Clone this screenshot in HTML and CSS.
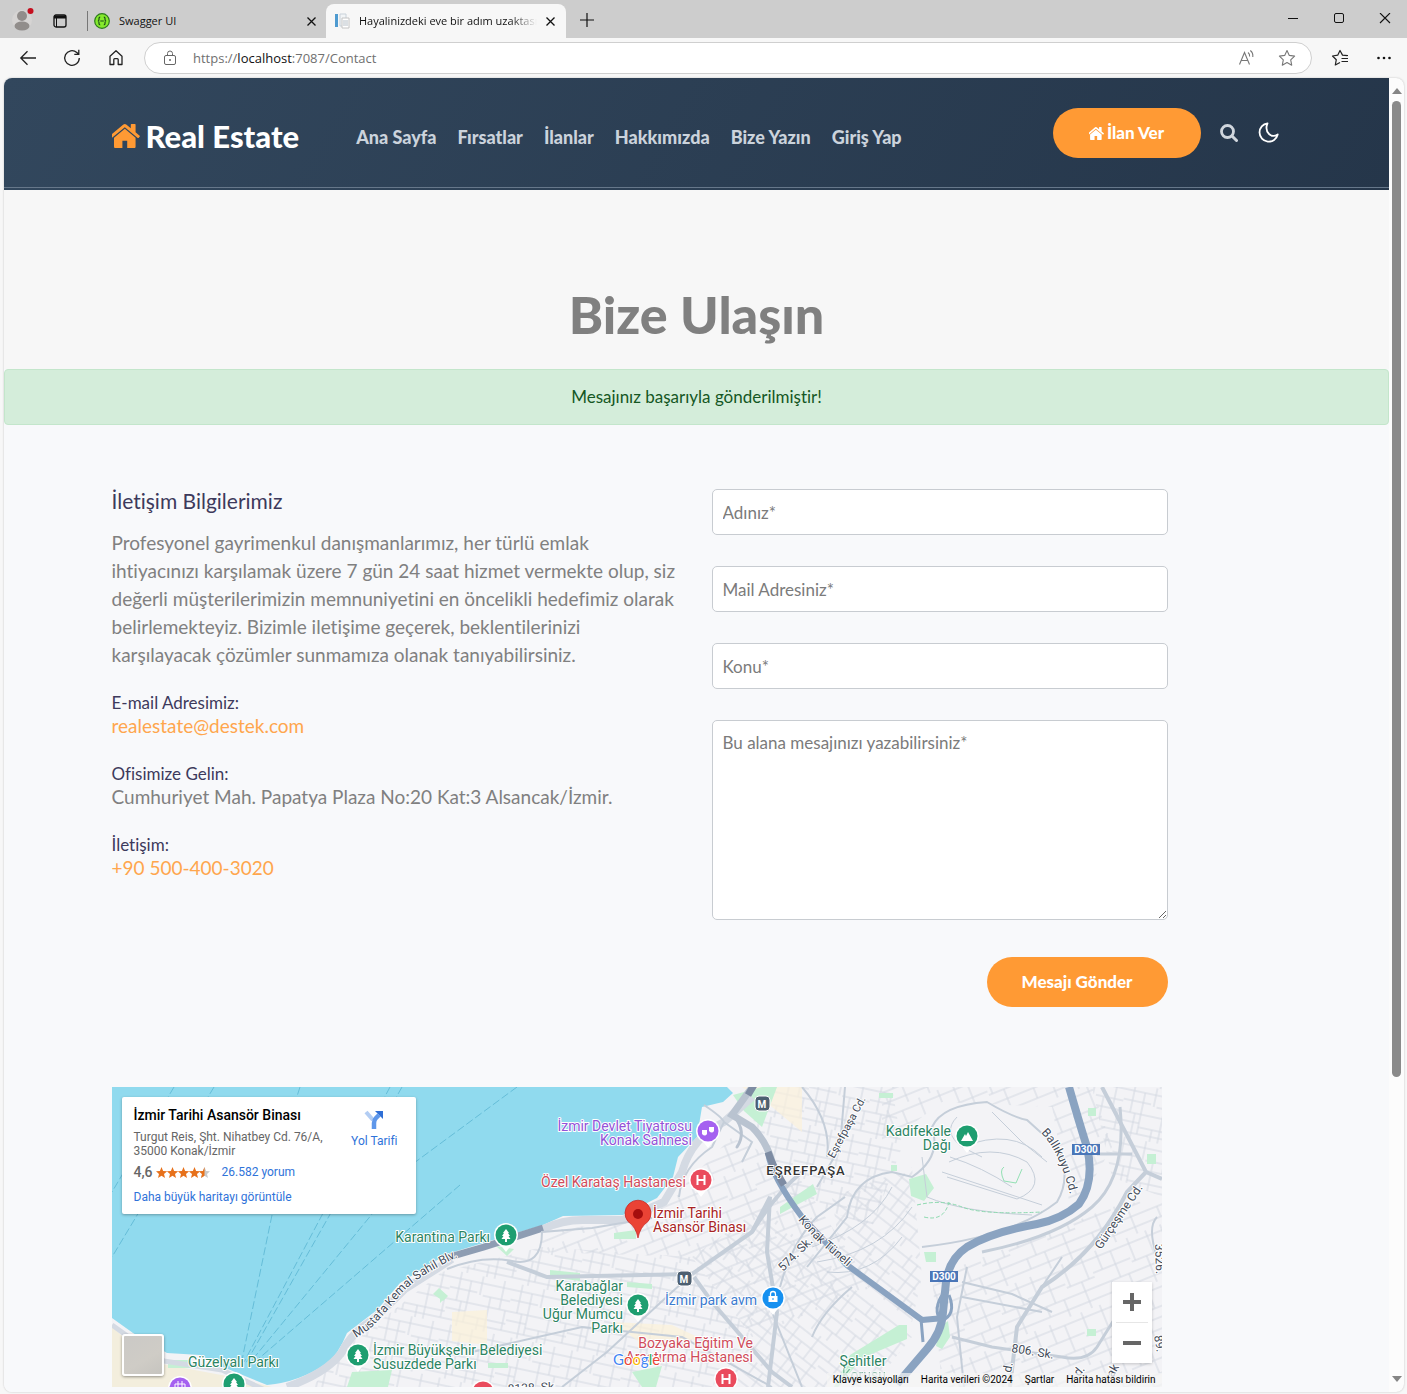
FILE: index.html
```html
<!DOCTYPE html>
<html lang="tr">
<head>
<meta charset="utf-8">
<meta name="viewport" content="width=device-width, initial-scale=1">
<title>Hayalinizdeki eve bir adım uzaktasınız</title>
<link rel="stylesheet" href="styles.css">
</head>
<body>
<div class="browser">
  <div class="tabbar">
    <button class="chrome-btn profile" aria-label="Profil">
      <svg width="26" height="26" viewBox="0 0 26 26"><circle cx="11" cy="14" r="10" fill="#d6d4d3"/><circle cx="11" cy="10" r="5" fill="#918d8b"/><ellipse cx="11" cy="20" rx="7.500" ry="4.500" fill="#918d8b"/><circle cx="19.500" cy="5" r="4" fill="#cdcdcd"/><circle cx="19.500" cy="5" r="3" fill="#c50f1f"/></svg>
    </button>
    <button class="chrome-btn workspaces" aria-label="Sekme eylemleri">
      <svg width="14" height="14" viewBox="0 0 14 14"><rect x="1" y="1" width="12" height="12" rx="2" fill="none" stroke="#111" stroke-width="1.300"/><path d="M1 1.500h12V4.500H1z" fill="#111"/><path d="M3.500 4v9" stroke="#111"/></svg>
    </button>
    <div class="tab tab-idle">
      <svg width="16" height="16" viewBox="0 0 16 16"><circle cx="8" cy="8" r="7.300" fill="#85ea2d" stroke="#2c7a1c" stroke-width="1.200"/><path d="M6.200 4.200c-1.300 0-1.200.8-1.200 2 0 1-.2 1.800-1.200 1.800 1 0 1.200.8 1.200 1.800 0 1.200-.1 2 1.200 2M9.800 4.200c1.300 0 1.200.8 1.200 2 0 1 .2 1.800 1.200 1.800-1 0-1.200.8-1.200 1.800 0 1.200.1 2-1.200 2M6.300 8h3.500" fill="none" stroke="#1d4a1d" stroke-width="1.200"/></svg>
      <span class="tab-title">Swagger UI</span>
      <button class="chrome-btn" aria-label="Sekmeyi kapat"><svg width="9" height="9" viewBox="0 0 9 9"><path d="M.5.5l8 8M8.500.5l-8 8" stroke="#111" stroke-width="1.300"/></svg></button>
    </div>
    <div class="tab tab-active">
      <svg width="16" height="16" viewBox="0 0 16 16"><path d="M1 1h3v13H1z" fill="#4f9bd0"/><path d="M6 1h6v12H6z" fill="#f2f5f7" stroke="#c9d2da"/><path d="M8 5h7v10H8z" fill="#fff" stroke="#c4c4c4"/><path d="M9 8h5M9 10h5M9 12h5" stroke="#b7c0c8"/></svg>
      <span class="tab-title tab-fade">Hayalinizdeki eve bir adım uzaktasınız</span>
      <button class="chrome-btn" aria-label="Sekmeyi kapat"><svg width="9" height="9" viewBox="0 0 9 9"><path d="M.5.5l8 8M8.500.5l-8 8" stroke="#111" stroke-width="1.300"/></svg></button>
    </div>
    <button class="chrome-btn new-tab" aria-label="Yeni sekme"><svg width="14" height="14" viewBox="0 0 14 14"><path d="M7 0v14M0 7h14" stroke="#111" stroke-width="1.200"/></svg></button>
    <div class="window-controls">
      <button class="chrome-btn" aria-label="Simge durumuna küçült"><svg width="12" height="12" viewBox="0 0 12 12"><path d="M1 5.500h10" stroke="#111"/></svg></button>
      <button class="chrome-btn" aria-label="Ekranı kapla"><svg width="12" height="12" viewBox="0 0 12 12"><rect x="1.500" y=".5" width="9" height="9" rx="1.500" fill="none" stroke="#111"/></svg></button>
      <button class="chrome-btn" aria-label="Kapat"><svg width="12" height="12" viewBox="0 0 12 12"><path d="M1 0l10 10M11 0L1 10" stroke="#111" stroke-width="1.100"/></svg></button>
    </div>
  </div>

  <div class="toolbar">
    <button class="chrome-btn" aria-label="Geri"><svg width="18" height="18" viewBox="0 0 18 18"><path d="M17 9H2M8.500 2.200L1.800 9l6.700 6.800" fill="none" stroke="#222" stroke-width="1.300"/></svg></button>
    <button class="chrome-btn" aria-label="Yenile"><svg width="18" height="18" viewBox="0 0 18 18"><path d="M16.300 9A7.300 7.300 0 1 1 13.800 3.500L15.800 5.300M15.800.8v4.600h-4.500" fill="none" stroke="#222" stroke-width="1.300"/></svg></button>
    <button class="chrome-btn" aria-label="Giriş"><svg width="18" height="18" viewBox="0 0 18 18"><path d="M3 7.200L9 1.800l6 5.400v8.300h-3.800V10.500q0-.9-.9-.9H7.700q-.9 0-.9.900v5H3z" fill="none" stroke="#222" stroke-width="1.300" stroke-linejoin="round"/></svg></button>
    <div class="address">
      <svg width="14" height="16" viewBox="0 0 14 16"><rect x="1.500" y="5.500" width="11" height="9" rx="1.500" fill="none" stroke="#666"/><path d="M4.500 5.500V3.500a2.500 2.500 0 0 1 5 0v2" fill="none" stroke="#666"/><circle cx="7" cy="10" r="1" fill="#666"/></svg>
      <div class="url">https://<span class="host">localhost</span>:7087/Contact</div>
      <button class="chrome-btn" aria-label="Sesli oku"><svg width="18" height="18" viewBox="0 0 18 18"><path d="M1.500 15.500L6.500 3.500l5 12M3.300 11.500h6.500M10 3.500q2 1.500 1.600 4M12.300 1.500q3 2.300 2.500 6.500" fill="none" stroke="#777" stroke-width="1.100"/></svg></button>
      <button class="chrome-btn" aria-label="Sık kullanılanlara ekle"><svg width="18" height="18" viewBox="0 0 18 18"><path d="M9 1.500l2.300 4.900 5.300.7-3.900 3.700 1 5.400L9 13.600l-4.700 2.600 1-5.400L1.400 7.100l5.300-.7z" fill="none" stroke="#777" stroke-width="1.100" stroke-linejoin="round"/></svg></button>
    </div>
    <button class="chrome-btn" aria-label="Sık kullanılanlar"><svg width="18" height="18" viewBox="0 0 18 18"><path d="M16.500 6.700l-5-.6L9 1.500 6.700 6.200l-5.200.8 3.800 3.700-1 5.300L9 13.500M10.500 9.500H17M10.500 12.500H17M12 6.500h5" fill="none" stroke="#222" stroke-width="1.200" stroke-linejoin="round"/></svg></button>
    <button class="chrome-btn" aria-label="Ayarlar ve diğerleri"><svg width="18" height="18" viewBox="0 0 18 18"><g fill="#111"><circle cx="3.500" cy="9" r="1.300"/><circle cx="9" cy="9" r="1.300"/><circle cx="14.500" cy="9" r="1.300"/></g></svg></button>
  </div>

  <div class="viewport">
    <div class="page">
      <header class="site-header">
        <div class="container header-row">
          <a class="logo" href="#">
            <svg width="28" height="24" viewBox="149 253 1494 1283" fill="#ff9a34"><path id="house" d="M1408 992v480q0 26-19 45t-45 19h-384v-384h-256v384h-384q-26 0-45-19t-19-45v-480q0-1 .5-3t.5-3l575-474 575 474q1 2 1 6zm223-69l-62 74q-8 9-21 11h-3q-13 0-21-7l-692-577-692 577q-12 8-24 7-13-2-21-11l-62-74q-8-10-7-23.500t11-21.500l719-599q32-26 76-26t76 26l244 204v-195q0-14 9-23t23-9h192q14 0 23 9t9 23v408l219 182q10 8 11 21.500t-7 23.500z"/></svg>
            <span>Real Estate</span>
          </a>
          <nav class="menu">
            <a href="#">Ana Sayfa</a><a href="#">Fırsatlar</a><a href="#">İlanlar</a><a href="#">Hakkımızda</a><a href="#">Bize Yazın</a><a href="#">Giriş Yap</a>
          </nav>
          <div class="actions">
            <a class="btn post-btn" href="#">
              <svg width="15" height="13" viewBox="149 253 1494 1283" fill="#fff"><path d="M1408 992v480q0 26-19 45t-45 19h-384v-384h-256v384h-384q-26 0-45-19t-19-45v-480l576-480 576 480zm223-69l-62 74q-8 9-21 11h-3q-13 0-21-7l-692-577-692 577q-12 8-24 7-13-2-21-11l-62-74q-8-10-7-23.500t11-21.500l719-599q32-26 76-26t76 26l244 204v-195q0-14 9-23t23-9h192q14 0 23 9t9 23v408l219 182q10 8 11 21.500t-7 23.500z"/></svg>
              <span>İlan Ver</span>
            </a>
            <button class="icon-btn" aria-label="Ara"><svg width="18" height="18" viewBox="0 0 18 18"><circle cx="7.500" cy="7.500" r="6" fill="none" stroke="#d0d6dd" stroke-width="2.800"/><path d="M12 12l4.500 4.500" stroke="#d0d6dd" stroke-width="3" stroke-linecap="round"/></svg></button>
            <button class="icon-btn" aria-label="Karanlık mod"><svg width="22" height="22" viewBox="0 0 22 22"><path d="M10.500 1.300A9.200 9.200 0 1 0 20.700 12.500Q16 15.400 12.300 12.300Q7.700 7.800 10.500 1.300z" fill="none" stroke="#fff" stroke-width="1.800" stroke-linejoin="round"/></svg></button>
          </div>
        </div>
      </header>

      <section class="banner"><h1>Bize Ulaşın</h1></section>
      <div class="alert" role="alert">Mesajınız başarıyla gönderilmiştir!</div>

      <main class="container">
        <div class="contact">
          <section class="info">
            <h2>İletişim Bilgilerimiz</h2>
            <p class="intro">Profesyonel gayrimenkul danışmanlarımız, her türlü emlak<br>ihtiyacınızı karşılamak üzere 7 gün 24 saat hizmet vermekte olup, siz<br>değerli müşterilerimizin memnuniyetini en öncelikli hedefimiz olarak<br>belirlemekteyiz. Bizimle iletişime geçerek, beklentilerinizi<br>karşılayacak çözümler sunmamıza olanak tanıyabilirsiniz.</p>
            <h3>E-mail Adresimiz:</h3>
            <p><a href="mailto:realestate@destek.com">realestate@destek.com</a></p>
            <h3>Ofisimize Gelin:</h3>
            <p>Cumhuriyet Mah. Papatya Plaza No:20 Kat:3 Alsancak/İzmir.</p>
            <h3>İletişim:</h3>
            <p><a href="tel:+905004003020">+90 500-400-3020</a></p>
          </section>
          <form class="form">
            <input type="text" aria-label="Adınız" placeholder="Adınız*">
            <input type="email" aria-label="Mail Adresiniz" placeholder="Mail Adresiniz*">
            <input type="text" aria-label="Konu" placeholder="Konu*">
            <textarea aria-label="Mesaj" placeholder="Bu alana mesajınızı yazabilirsiniz*"></textarea>
            <button class="btn send-btn" type="button">Mesajı Gönder</button>
          </form>
        </div>

        <div class="map">
          <svg class="map-canvas" viewBox="0 0 1050 300" preserveAspectRatio="xMidYMid slice">
            <defs>
              <pattern id="gridA" width="62" height="54" patternUnits="userSpaceOnUse" patternTransform="rotate(12)"><path d="M0 7h62M0 17h28M34 19h28M0 29h62M0 38h20M20 42h42M0 49h62M9 0v29M20 7v42M31 0v19M42 19v35M53 0v29M14 29v25M34 42v12M59 29v20" class="street"/></pattern>
              <pattern id="gridB" width="56" height="60" patternUnits="userSpaceOnUse" patternTransform="rotate(38)"><path d="M0 5h56M0 16h56M0 25h30M30 29h26M0 38h56M0 50h56M6 0v16M17 5v33M28 16v44M40 0v29M51 16v34M11 38v22M36 38v12M47 50v10" class="street"/></pattern>
              <pattern id="gridC" width="70" height="52" patternUnits="userSpaceOnUse" patternTransform="rotate(-22)"><path d="M0 6h70M0 20h40M40 24h30M0 34h70M0 45h70M10 0v20M24 6v28M33 34v18M44 0v24M56 24v28M64 0v24M14 34v11" class="street"/></pattern>
              <g id="pin"><path d="M0 17L-7 8H7z" fill="#fff"/><circle r="12" fill="#fff"/><circle r="10.500"/></g>
              <g id="tree"><path d="M0-6L3-2H2L4 1H2.500L4.500 4H1v3h-2V4h-3.500L-2.500 1H-4l2-3h-1z" fill="#fff"/></g>
              <path id="lblSahil" d="M244 251L258 242Q272 228 289 207Q305 189 350 168"/>
              <path id="lblKonak" d="M686 133L704 153L745 188"/>
              <path id="lblBalli" d="M929 46Q948 64 960 115"/>
            </defs>

            <rect width="1050" height="300" fill="#f3f3f6"/>
            <path d="M235 260L330 185L430 160L580 170L640 250L600 300H200z" fill="url(#gridA)"/>
            <path d="M430 145L540 130L620 50L680 80L760 200L640 250L580 170L430 165z" fill="url(#gridC)"/>
            <path d="M580 170L650 120L740 200L800 250L760 300H600L640 250z" fill="url(#gridB)"/>
            <path d="M650 0H780L790 60L760 140L680 110L640 40z" fill="url(#gridA)"/>
            <path d="M720 110L800 80L810 190L800 235L730 180z" fill="url(#gridB)"/>
            <path d="M770 0H980L1000 60L960 130L940 20L830 15L770 60z" fill="url(#gridC)"/>
            <path d="M980 0H1050V110L1000 90z" fill="url(#gridA)"/>
            <path d="M820 190L1000 120L1050 110V300H830z" fill="url(#gridC)"/>
            <path d="M40 275L120 290L160 300H0V240z" fill="#f3eedd"/>
            <path d="M630 0H690V45L660 20z" fill="#fbf1dc" opacity=".7"/>
            <path d="M340 225l35-2v35l-35-4zM500 235l60 3 30 14-60 5z" fill="#fbf1d8" opacity=".7"/>

            <g fill="#c5f0d4">
              <path d="M621 8L650 0H665L650 40L632 24z"/><path d="M502 146l22-3v9h-22zM438 183l30 3v8l-30-4zM515 195l25 2v5l-25-2zM328 202l6 8-6 6zM321 207l6-6 9 8-5 5zM376 276h20v5h-20z"/>
              <path d="M797 92l17-5 8 14-10 13-13-5zM668 120l33-23 4 10-37 20zM812 165h12v10h-10zM976 21h8v8h-8zM1035 67h9v10h-9zM779 78h6v6h-6zM767 6h14v5h-14z"/>
              <path d="M738 268L787 238L795 238V252L750 271L726 300H722zM828 240l8-6 2 16-8 12-6-3zM975 242h9v7h-9z"/><path d="M235 300l5-15 40-2-4 17zM56 273h22v8h-22zM384 159l18 3-7 7zM520 285l30-6-6 21h-14z"/>
            </g>

            <path d="M0 231L21 246L55 266L88 268L111 280L155 298Q188 295 215 276Q226 268 235 246L265 223L288 196L335 167L371 156L431 138L451 129L511 128L545 111L561 90L566 70L585 50L590 20L611 15L621 6L615 0H0z" fill="#90daee"/>

            <g fill="none" stroke="#65bdd8" stroke-width="1" stroke-dasharray="8 3">
              <path d="M62 0L0 105M102 0L0 170M188 0L180 25M160 128L130 273M278 0L132 275M290 0L134 276M405 0L302 76L136 278M348 98L137 280"/>
            </g>

            <g fill="none" stroke="#d4dae3" stroke-width="8" stroke-linejoin="round">
              <path d="M0 238L21 253L52 274L110 283L155 304" stroke-width="5"/>
              <path d="M175 300Q215 286 230 265Q240 245 262 232L293 202L340 172"/>
              <path d="M431 142Q450 133 471 133L511 133L552 115L570 85Q580 50 612 35L640 10"/>
            </g>
            <path d="M334 171L372 160L431 141" fill="none" stroke="#8e9db3" stroke-width="7"/>

            <g fill="none" stroke="#c5ced9" stroke-width="2">
              <path d="M335 182Q370 168 400 174T430 145L480 141L540 131"/>
              <path d="M395 175L435 190L580 187L640 145Q665 105 690 85" stroke-width="4"/>
              <path d="M580 187L560 205L495 265L450 300M360 265L470 240L570 250L660 300"/>
              <path d="M640 145L658 110L655 165L665 225L656 300M582 190L600 215L660 285L680 300" stroke-width="4"/>
              <path d="M660 225L690 300M592 18Q610 30 612 35L600 60Q570 80 567 110M612 35L640 55L630 75"/>
              <path d="M695 180L735 130Q740 90 780 85L800 90Q830 70 820 40Q830 18 875 15Q900 30 915 33L945 60Q960 90 945 115Q900 150 810 160"/>
              <path d="M810 70L815 110Q850 125 920 128M837 75Q880 55 915 75Q935 100 905 112L835 90M850 60Q900 40 930 70" stroke-width="1"/>
              <path d="M830 85L930 118M838 70Q870 80 900 100M845 30Q830 45 850 60L870 70M880 25L910 55L935 75M700 160Q760 140 780 100M705 175Q770 165 800 120M715 185Q760 190 790 150" stroke-width="1"/>
              <path d="M990 0L1034 85L1050 92M1034 85L1015 105Q985 165 930 200L905 240L898 300" stroke-width="4"/>
              <path d="M1008 20Q1015 90 980 120T870 165M985 67h35M840 250L880 260L950 270Q975 275 985 260L1010 220" stroke-width="3"/>
              <path d="M1045 130q-10 10 0 40M740 200q-30 25-40 50M855 180L845 230L852 300M950 170L920 215M690 0Q720 35 715 70"/>
              <path d="M668 200Q680 155 705 130L733 110M733 0L728 60L705 100M850 210L930 225M850 195l50 12 40 18"/>
            </g>
            <path d="M805 118Q830 112 850 120T930 125M812 130q20 5 25-15" fill="none" stroke="#8edab0" stroke-dasharray="4 2"/>
            <path d="M892 80q-5 3 0 14l12 2 6-14" fill="none" stroke="#93e0b4"/>

            <g fill="none" stroke="#b9c3d0" stroke-linecap="round">
              <path d="M638 3L620 28L640 40Q655 55 660 75" stroke-width="7"/>
              <path d="M622 29Q635 45 625 60" stroke-width="3"/>
            </g>
            <g fill="none" stroke="#8aa3c1" stroke-linejoin="round">
              <path d="M656 66Q660 90 690 130L735 178L810 233L832 231" stroke-width="6"/>
              <path d="M957 0Q970 45 975 60Q983 95 967 117Q950 132 925 137Q880 145 855 160Q837 172 834 195L831 225Q830 245 815 262L785 297" stroke-width="8"/>
              <path d="M832 205Q820 222 829 234Q845 228 837 208M809 232L811 255" stroke-width="3"/>
            </g>
            <path d="M656 65Q662 82 672 98M636 8L642-2" fill="none" stroke="#7e8ca3" stroke-width="7"/>

            <g class="road-label">
              <text><textPath href="#lblSahil">Mustafa Kemal Sahil Blv.</textPath></text>
              <text><textPath href="#lblKonak">Konak Tüneli</textPath></text>
              <text><textPath href="#lblBalli">Ballıkuyu Cd.</textPath></text>
              <text transform="translate(722 72) rotate(-62)" class="small-road">Eşrefpaşa Cd.</text>
              <text transform="translate(671 185) rotate(-45)">574. Sk.</text>
              <text transform="translate(989 163) rotate(-56)">Gürçeşme Cd.</text>
              <text transform="translate(899 265) rotate(9)">806. Sk.</text>
              <text transform="translate(1043 157) rotate(88)">3526.</text>
              <text transform="translate(1042 249) rotate(80)">89.</text>
              <text transform="translate(1001 291) rotate(-60)">ak</text>
              <text transform="translate(899 286) rotate(-80)">d.</text>
              <text transform="translate(967 290) rotate(-50)">d.</text>
              <text transform="translate(396 306) rotate(-3)">8138. Sk.</text>
            </g>

            <g class="shield"><rect x="960" y="57" width="28" height="11"/><text x="974" y="66">D300</text><rect x="818" y="184" width="28" height="11"/><text x="832" y="193">D300</text></g>

            <g class="metro"><rect x="643" y="9" width="15" height="15" rx="4"/><text x="650" y="21">M</text><rect x="565" y="184" width="15" height="15" rx="4"/><text x="572" y="196">M</text></g>

            <g class="pin-park"><use href="#pin" x="394" y="148"/><use href="#tree" x="394" y="148"/><use href="#pin" x="246" y="268"/><use href="#tree" x="246" y="268"/><use href="#pin" x="122" y="297"/><use href="#tree" x="122" y="297"/><use href="#pin" x="526" y="218"/><use href="#tree" x="526" y="218"/><use href="#pin" x="855" y="49"/><path d="M849 54l4-7 1 2 2-4 5 9z" fill="#fff"/></g>
            <g class="pin-hospital"><use href="#pin" x="589" y="93"/><use href="#pin" x="614" y="292"/><use href="#pin" x="371" y="305"/><path d="M585.500 88v10M592.500 88v10M585.500 93h7M610.500 287v10M617.500 287v10M610.500 292h7" stroke="#fff" stroke-width="2"/></g>
            <g class="pin-theatre"><use href="#pin" x="596" y="44"/><path d="M590 43h5v4q-2 3-5 0zM597 40h5v4q-2 3-5 0z" fill="#fff"/><use href="#pin" x="68" y="301"/><path d="M63 300v-3h10v3M66 294v6M70 294v6" fill="none" stroke="#fff"/></g>
            <g class="pin-shop"><use href="#pin" x="661" y="211"/><path d="M656.500 209h9v6h-9z" fill="#fff"/><path d="M658.500 209v-2a2.500 2.500 0 0 1 5 0v2" fill="none" stroke="#fff" stroke-width="1.300"/><path d="M661 211v2" stroke="#1690f0"/></g>
            <path d="M526 151Q524 140 516 134.500A13 13 0 1 1 536 134.500Q528 140 526 151z" fill="#ea4335" stroke="#c5221f" stroke-width=".7"/><circle cx="526" cy="127" r="5" fill="#a50e0e"/>

            <g class="place">
              <g class="park">
                <text x="378" y="155" class="end">Karantina Parkı</text>
                <text x="76" y="280">Güzelyalı Parkı</text>
                <text x="261" y="268">İzmir Büyükşehir Belediyesi</text><text x="261" y="282">Susuzdede Parkı</text>
                <text x="511" y="204" class="end">Karabağlar</text><text x="511" y="218" class="end">Belediyesi</text><text x="511" y="232" class="end">Uğur Mumcu</text><text x="511" y="246" class="end">Parkı</text>
                <text x="839" y="49" class="end">Kadifekale</text><text x="839" y="63" class="end">Dağı</text>
                <text x="751" y="279" class="mid">Şehitler</text><text x="752" y="293" class="mid faded">Korusu</text>
              </g>
              <g class="theatre"><text x="580" y="44" class="end">İzmir Devlet Tiyatrosu</text><text x="580" y="58" class="end">Konak Sahnesi</text></g>
              <g class="hospital"><text x="574" y="100" class="end">Özel Karataş Hastanesi</text><text x="641" y="261" class="end">Bozyaka Eğitim Ve</text><text x="641" y="275" class="end">Araştırma Hastanesi</text></g>
              <g class="selected"><text x="541" y="131">İzmir Tarihi</text><text x="541" y="145">Asansör Binası</text></g>
              <text x="645" y="218" class="end shop">İzmir park avm</text>
              <text x="694" y="88" class="mid district">EŞREFPAŞA</text>
            </g>
            <text x="501" y="278" class="google"><tspan fill="#4285f4">G</tspan><tspan fill="#ea4335">o</tspan><tspan fill="#fbbc05">o</tspan><tspan fill="#4285f4">g</tspan><tspan fill="#34a853">l</tspan><tspan fill="#ea4335">e</tspan></text>
          </svg>

          <div class="place-card">
            <div class="place-main">
              <h4>İzmir Tarihi Asansör Binası</h4>
              <p>Turgut Reis, Şht. Nihatbey Cd. 76/A,<br>35000 Konak/İzmir</p>
              <div class="rating"><b>4,6</b>
                <svg width="54" height="11" viewBox="0 0 54 11"><defs><path id="star" d="M5.500 0l1.600 3.900 4.100.3L8 6.900l1 4-3.500-2.200L2 10.900l1-4L-.2 4.200l4.100-.3z"/></defs><g fill="#e7711b"><use href="#star"/><use href="#star" x="11"/><use href="#star" x="22"/><use href="#star" x="33"/></g><use href="#star" x="43" fill="#c9c9c9"/><path d="M48.500 0v8.700L45 10.900l1-4-3.200-2.700 4.100-.3z" fill="#e7711b"/></svg>
                <a href="#">26.582 yorum</a></div>
              <a href="#">Daha büyük haritayı görüntüle</a>
            </div>
            <a class="directions" href="#">
              <svg width="20" height="20" viewBox="0 0 20 20"><path d="M2 2l7 8" stroke="#b3cdf3" stroke-width="4"/><path d="M10 19v-6q0-3 2-5l3-3" fill="none" stroke="#5e97ea" stroke-width="4.500"/><path d="M11 1h8v8z" fill="#2f6fd6"/></svg>
              <span>Yol Tarifi</span>
            </a>
          </div>
          <button class="satellite" aria-label="Uydu görüntüsü"></button>
          <div class="zoom">
            <button aria-label="Yakınlaştır"><svg width="18" height="18" viewBox="0 0 18 18"><path d="M9 0v18M0 9h18" stroke="#666" stroke-width="4"/></svg></button>
            <button aria-label="Uzaklaştır"><svg width="18" height="18" viewBox="0 0 18 18"><path d="M0 9h18" stroke="#666" stroke-width="4"/></svg></button>
          </div>
          <div class="map-terms"><a href="#">Klavye kısayolları</a><span>Harita verileri ©2024</span><a href="#">Şartlar</a><a href="#">Harita hatası bildirin</a></div>
        </div>
      </main>
    </div>
    <div class="scrollbar">
      <svg width="10" height="6" viewBox="0 0 10 6"><path d="M5 0l5 6H0z" fill="#858585"/></svg>
      <div class="track"><div class="thumb"></div></div>
      <svg width="10" height="6" viewBox="0 0 10 6"><path d="M5 6l5-6H0z" fill="#858585"/></svg>
    </div>
  </div>
</div>
</body>
</html>
```
FILE: styles.css
```css
* { box-sizing: border-box; }

body {
  margin: 0;
  background: #f0f7fa;
  font-family: Lato, "Open Sans", sans-serif;
  font-variant-ligatures: none;
  font-size: 17px;
  color: #808080;
}

h1, h2, h3, h4, p { margin: 0; font-weight: 400; }
a { color: inherit; text-decoration: none; }
button { border: 0; padding: 0; background: none; font: inherit; cursor: pointer; }
svg { display: block; flex: none; }

.browser { min-height: 100vh; display: flex; flex-direction: column; background: #f7f7f7; }

/* Tab strip */
.tabbar {
  height: 38px;
  display: flex;
  align-items: center;
  padding-left: 11px;
  background: #cdcdcd;
  font: 11px/16px "Open Sans", sans-serif;
  color: #111;
}
.chrome-btn { display: flex; align-items: center; justify-content: center; flex: none; }
.profile { width: 26px; }
.workspaces { width: 14px; margin: 3px 0 0 16px; }
.tab { display: flex; align-items: center; gap: 9px; }
.tab-idle { width: 239px; height: 20px; margin: 4px 0 0 20px; padding: 0 10px 0 6px; border-left: 1px solid #777; }
.tab-active { width: 240px; height: 34px; margin-top: 4px; padding: 0 11px 0 8px; border-radius: 8px 8px 0 0; background: #f7f7f7; }
.tab-title { flex: 1; min-width: 0; overflow: hidden; white-space: nowrap; }
.tab-fade { mask-image: linear-gradient(90deg, #000 85%, transparent); }
.new-tab { margin: 2px 0 0 14px; }
.window-controls { display: flex; gap: 34px; margin-left: auto; padding-right: 16px; }

/* Address row */
.toolbar { height: 40px; display: flex; align-items: center; gap: 26px; padding: 0 14px 0 19px; }
.address {
  flex: 1;
  height: 32px;
  display: flex;
  align-items: center;
  gap: 22px;
  margin: 0 -7px;
  padding: 0 15px 0 18px;
  border: 1px solid #cfcfcf;
  border-radius: 16px;
  background: #fff;
}
.url { flex: 1; margin-left: -6px; font: 13px/20px "Open Sans", sans-serif; color: #707070; }
.host { color: #111; }

/* Page area */
.viewport {
  flex: 1;
  display: flex;
  margin: 0 3px 2px 4px;
  border-radius: 8px;
  overflow: hidden;
  background: #fcfcfc;
  box-shadow: 0 0 2px #bbb;
}
.page { flex: 1; min-width: 0; padding-bottom: 5px; background: #f8f9fb; }
.container { width: calc(100% - 32px); max-width: 1170px; margin: 0 auto; }

.scrollbar { width: 15px; display: flex; flex-direction: column; align-items: center; gap: 7px; padding: 10px 0; }
.track { flex: 1; }
.thumb { width: 9px; height: 77%; border-radius: 5px; background: #8a8a8a; }

.site-header {
  padding-bottom: 2px;
  background: linear-gradient(120deg, #32475d, #25364a);
}
.header-row { display: flex; align-items: center; padding: 30px 0 29px; }
.site-header::after { content: ""; display: block; height: 1px; background: #66778a; }
.logo {
  display: flex;
  align-items: center;
  gap: 6px;
  padding-top: 5px;
  font-size: 31px;
  line-height: 36px;
  font-weight: 900;
  color: #fff;
}
.menu { display: flex; gap: 21px; margin-left: 57px; padding-top: 8px; font-size: 18px; line-height: 24px; font-weight: 900; color: #cbd3dc; }
.actions { display: flex; align-items: center; gap: 19px; margin-left: auto; padding-right: 3px; }
.btn {
  display: flex;
  align-items: center;
  justify-content: center;
  gap: 3px;
  height: 50px;
  border-radius: 25px;
  background: #ff9a34;
  color: #fff;
  font-size: 17px;
  line-height: 24px;
  font-weight: 900;
}
.post-btn { width: 148px; }

.banner { padding: 94px 0 25px; background: #f7f7f7; text-align: center; }
.banner h1 { font-size: 52px; line-height: 60px; font-weight: 900; }
.alert {
  padding: 15px 20px;
  border: 1px solid #c3e6cb;
  border-radius: 4px;
  background: #d4edda;
  color: #155724;
  line-height: 24px;
  text-align: center;
}

/* Contact block */
.contact { display: grid; grid-template-columns: 5fr 4fr; gap: 30px; max-width: 1056px; padding: 64px 0 80px; }
.info h2 { font-size: 21px; line-height: 24px; color: #3d3a5c; }
.info h3 { margin-top: 24px; font-size: 17px; line-height: 23px; color: #3d3a5c; }
.info p { font-size: 19px; line-height: 24px; white-space: nowrap; }
.info .intro { margin-top: 16px; line-height: 28px; }
.info .intro + h3 { margin-top: 22px; }
.info a { color: #ffa64d; }

.form { display: flex; flex-direction: column; gap: 31px; }
.form input, .form textarea {
  width: 100%;
  height: 46px;
  padding: 10px;
  border: 1px solid #c8ccd1;
  border-radius: 5px;
  background: #fff;
  font: 17px/24px Lato, "Open Sans", sans-serif;
}
.form textarea { height: 200px; resize: vertical; }
.form ::placeholder { color: #7b7b7b; opacity: 1; }
.send-btn { width: 181px; margin-top: 6px; align-self: flex-end; }

/* Map */
.map { position: relative; max-width: 1050px; font-family: Roboto, sans-serif; }
.map-canvas { width: 100%; height: 300px; }
.street { fill: none; stroke: #d3d8e1; stroke-width: 1; }
.map text { paint-order: stroke; stroke: #fff; stroke-width: 2px; stroke-linejoin: round; }
.place { font-size: 14px; }
.end { text-anchor: end; }
.mid { text-anchor: middle; }
.park { fill: #2c8463; }
.faded { opacity: .5; }
.theatre { fill: #9353d8; }
.hospital { fill: #cf4c5b; }
.selected { fill: #a82323; }
.shop { fill: #3b7bd0; }
.district { font-size: 13px; font-weight: 500; letter-spacing: 1px; fill: #333; }
.road-label { font-size: 12px; fill: #444c5a; }
.small-road { font-size: 11px; }
.map .shield text, .map .metro text { stroke: none; fill: #fff; font-size: 10px; font-weight: 700; text-anchor: middle; }
.shield rect { fill: #4a76b8; }
.metro rect { fill: #4d5f70; stroke: #fff; }
.pin-park { fill: #1e9e70; }
.pin-hospital { fill: #ea4b5d; }
.pin-theatre { fill: #a561f0; }
.pin-shop { fill: #1690f0; }
.google { font: 15px Lato, sans-serif; }

.place-card {
  position: absolute;
  top: 10px;
  left: 10px;
  width: 294px;
  display: flex;
  justify-content: space-between;
  padding: 10px 18px 10px 12px;
  border-radius: 2px;
  background: #fff;
  box-shadow: 0 1px 3px rgba(0, 0, 0, .3);
  font-size: 12px;
  line-height: 14px;
  color: #666;
}
.place-card h4 { margin-bottom: 7px; font-size: 14px; line-height: 16px; font-weight: 500; color: #000; }
.place-card a { color: #2f73d9; }
.rating { display: flex; align-items: center; gap: 3px; margin: 6px 0 10px; }
.rating b { font-size: 14px; font-weight: 500; line-height: 16px; }
.rating a { margin-left: 9px; }
.directions { display: flex; flex-direction: column; align-items: center; gap: 4px; padding-top: 3px; }
.satellite {
  position: absolute;
  left: 10px;
  bottom: 11px;
  width: 42px;
  height: 42px;
  border: 2px solid #fff;
  border-radius: 3px;
  background: linear-gradient(150deg, #cbc9c6, #cfccc6 60%, #c6c4bf);
  box-shadow: 0 1px 3px rgba(0, 0, 0, .4);
}
.zoom { position: absolute; right: 10px; bottom: 24px; width: 40px; padding: 0 4px; background: #fff; box-shadow: 0 1px 3px rgba(0, 0, 0, .2); }
.zoom button { width: 32px; height: 40px; display: flex; align-items: center; justify-content: center; }
.zoom button + button { height: 41px; border-top: 1px solid #e6e6e6; }
.map-terms {
  position: absolute;
  right: 0;
  bottom: 0;
  display: flex;
  gap: 12px;
  padding: 0 6px;
  background: rgba(245, 245, 245, .7);
  font-size: 10px;
  line-height: 14px;
  color: #000;
}
```
